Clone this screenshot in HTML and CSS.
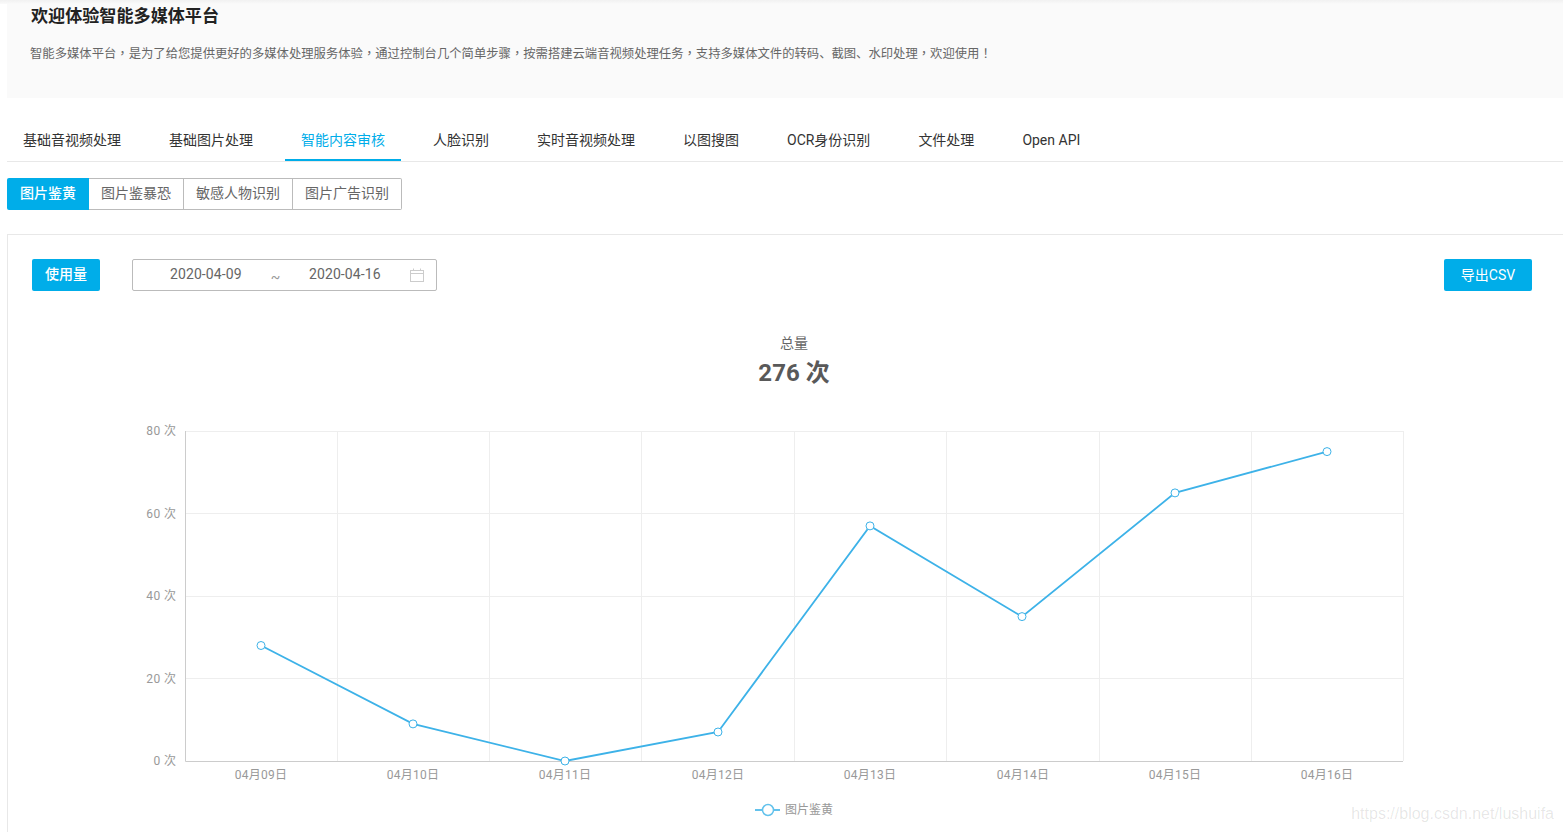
FILE: index.html
```html
<!DOCTYPE html>
<html>
<head>
  <meta charset="utf-8">
  <title>智能多媒体平台</title>
  <link rel="stylesheet" href="styles.css">
</head>
<body>
  <div class="page">
    <div class="intro">
      <h1 class="intro-title">欢迎体验智能多媒体平台</h1>
      <p class="intro-desc">智能多媒体平台<span class="punct">，</span>是为了给您提供更好的多媒体处理服务体验<span class="punct">，</span>通过控制台几个简单步骤<span class="punct">，</span>按需搭建云端音视频处理任务<span class="punct">，</span>支持多媒体文件的转码、截图、水印处理<span class="punct">，</span>欢迎使用<span class="punct">！</span></p>
    </div>

    <div class="tabs">
      <a class="tab" href="#">基础音视频处理</a>
      <a class="tab" href="#">基础图片处理</a>
      <a class="tab active" href="#">智能内容审核</a>
      <a class="tab" href="#">人脸识别</a>
      <a class="tab" href="#">实时音视频处理</a>
      <a class="tab" href="#">以图搜图</a>
      <a class="tab" href="#">OCR身份识别</a>
      <a class="tab" href="#">文件处理</a>
      <a class="tab" href="#">Open API</a>
    </div>

    <div class="sub-tabs">
      <a class="sub-tab active" href="#">图片鉴黄</a>
      <a class="sub-tab" href="#">图片鉴暴恐</a>
      <a class="sub-tab" href="#">敏感人物识别</a>
      <a class="sub-tab" href="#">图片广告识别</a>
    </div>

    <div class="card">
      <div class="toolbar">
        <button class="btn">使用量</button>
        <div class="date-range">
          <span class="date">2020-04-09</span>
          <span class="date-sep">~</span>
          <span class="date">2020-04-16</span>
          <svg class="date-icon" width="14" height="14" viewBox="0 0 14 14" fill="none" stroke="#ccc">
            <rect x="0.5" y="2.5" width="13" height="11"/>
            <path d="M0.5 5.5H13.5M3.5 0.5V2.5M10.5 0.5V2.5"/>
          </svg>
        </div>
        <button class="btn btn-export">导出CSV</button>
      </div>

      <div class="summary">
        <div class="summary-label">总量</div>
        <div class="summary-value">276 次</div>
      </div>

      <!-- viewBox uses the same numbers as the page so the points are easy to read -->
      <svg class="chart" width="1500" height="417" viewBox="32 415 1500 417">
        <g class="grid">
          <path d="M185 431.5H1403M185 513.5H1403M185 596.5H1403M185 678.5H1403"/>
          <path d="M337.5 431V761M489.5 431V761M641.5 431V761M794.5 431V761M946.5 431V761M1099.5 431V761M1251.5 431V761M1403.5 431V761"/>
        </g>
        <path class="axis" d="M185.5 431V761.5H1403"/>
        <g class="y-labels">
          <text x="176.4" y="435">80 次</text>
          <text x="176.4" y="518">60 次</text>
          <text x="176.4" y="600">40 次</text>
          <text x="176.4" y="683">20 次</text>
          <text x="176.4" y="765">0 次</text>
        </g>
        <g class="x-labels">
          <text x="261" y="779">04月09日</text>
          <text x="413" y="779">04月10日</text>
          <text x="565" y="779">04月11日</text>
          <text x="718" y="779">04月12日</text>
          <text x="870" y="779">04月13日</text>
          <text x="1023" y="779">04月14日</text>
          <text x="1175" y="779">04月15日</text>
          <text x="1327" y="779">04月16日</text>
        </g>
        <polyline class="line" points="261,645.5 413,723.9 565,761 718,732 870,525.9 1022,616.6 1175,492.9 1327,451.6"/>
        <g class="dots">
          <circle cx="261" cy="645.5" r="4"/>
          <circle cx="413" cy="723.9" r="4"/>
          <circle cx="565" cy="761" r="4"/>
          <circle cx="718" cy="732" r="4"/>
          <circle cx="870" cy="525.9" r="4"/>
          <circle cx="1022" cy="616.6" r="4"/>
          <circle cx="1175" cy="492.9" r="4"/>
          <circle cx="1327" cy="451.6" r="4"/>
        </g>
        <path class="legend-line" d="M755 810H780"/>
        <circle class="legend-dot" cx="768" cy="810" r="5.5"/>
        <text class="legend-text" x="785" y="814">图片鉴黄</text>
      </svg>
    </div>
  </div>

  <div class="watermark">https://blog.csdn.net/lushuifa</div>
</body>
</html>
```

FILE: styles.css
```css
html, body {
  margin: 0;
  padding: 0;
  height: 832px;
  overflow: hidden;
}

body {
  position: relative;
  background: linear-gradient(#f1f1f1, #fafafa) no-repeat 0 0 / 100% 4px #fff;
  font-family: Roboto, "Noto Sans CJK SC", sans-serif;
  font-size: 14px;
  color: #333;
}

a {
  text-decoration: none;
}

.page {
  padding-left: 7px;
}

.intro {
  box-sizing: border-box;
  height: 98px;
  padding: 6px 24px 0 23px;
  background: linear-gradient(#f1f1f1, #fafafa 4px);
}

.intro-title {
  margin: 0 0 0 1px;
  font-size: 17.1px;
  line-height: 21px;
  font-weight: 700;
  color: #222;
}

.intro-desc {
  margin: 16px 0 0;
  font-size: 12.33px;
  line-height: 20px;
  color: #666;
}

.punct {
  font-family: "Noto Sans CJK TC", sans-serif;
}

.tabs {
  display: flex;
  gap: 16px;
  margin-top: 21px;
  border-bottom: 1px solid #e8e8e8;
}

.tab {
  height: 42px;
  line-height: 43px;
  padding: 0 16px;
  color: #333;
}

.tab.active {
  height: 40px;
  color: #00ade9;
  border-bottom: 2px solid #00ade9;
}

.sub-tabs {
  display: flex;
  width: fit-content;
  margin-top: 16px;
  border-radius: 2px;
}

.sub-tab {
  box-sizing: border-box;
  height: 32px;
  line-height: 28px;
  padding: 0 12px;
  border: 1px solid #bbb;
  border-left: 0;
  color: #666;
}

.sub-tab:last-child {
  border-radius: 0 2px 2px 0;
}

.sub-tab.active {
  padding: 0 13px;
  background: #00ade9;
  border: 0;
  line-height: 30px;
  border-radius: 2px 0 0 2px;
  color: #fff;
  font-weight: 500;
}

.card {
  box-sizing: border-box;
  height: 600px;
  margin-top: 24px;
  padding: 24px 31px 0 24px;
  border: 1px solid #e8e8e8;
  border-right: 0;
  border-bottom: 0;
}

.toolbar {
  display: flex;
  align-items: center;
  gap: 32px;
}

.btn {
  height: 32px;
  padding: 0 13px 5px;
  border: 0;
  border-radius: 2px;
  background: #00ade9;
  color: #fff;
  font: 500 14px Roboto, "Noto Sans CJK SC", sans-serif;
}

.btn-export {
  width: 88px;
  margin-left: auto;
  padding: 0 0 3px;
  font-weight: 400;
}

.date-range {
  box-sizing: border-box;
  display: flex;
  align-items: center;
  width: 305px;
  height: 32px;
  padding: 0 12px 0 37px;
  border: 1px solid #bbb;
  border-radius: 2px;
  color: #666;
}

.date {
  width: 72px;
  padding-bottom: 3px;
  letter-spacing: 0.1px;
}

.date-sep {
  width: 67px;
  padding-top: 4px;
  text-align: center;
  color: #999;
}

.date-icon {
  margin-left: auto;
}

.summary {
  margin-top: 41px;
  padding-left: 24px;
  text-align: center;
  color: #666;
}

.summary-label {
  line-height: 22px;
}

.summary-value {
  margin-top: 3px;
  font-size: 24px;
  line-height: 32px;
  font-weight: 700;
  color: #595959;
}

.chart {
  display: block;
  margin-top: 26px;
  font-size: 12px;
}

.grid path {
  fill: none;
  stroke: #eee;
}

.axis {
  fill: none;
  stroke: #ccc;
}

.y-labels text {
  fill: #999;
  text-anchor: end;
  letter-spacing: 0.4px;
}

.x-labels text {
  fill: #999;
  text-anchor: middle;
  letter-spacing: 0.25px;
}

.line {
  fill: none;
  stroke: #3db2e8;
  stroke-width: 1.8;
}

.dots circle {
  fill: #fff;
  stroke: #3db2e8;
}

.legend-line {
  stroke: #63c2ec;
  stroke-width: 2;
}

.legend-dot {
  fill: #fff;
  stroke: #63c2ec;
  stroke-width: 1.5;
}

.legend-text {
  fill: #999;
}

.watermark {
  position: absolute;
  right: 9px;
  bottom: 9px;
  font-family: "Liberation Sans", sans-serif;
  font-size: 16px;
  line-height: 18px;
  color: rgba(0, 0, 0, 0.1);
}
```
